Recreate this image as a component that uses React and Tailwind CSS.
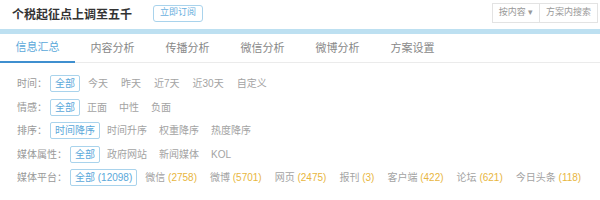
import React from 'react';

const FONT = '"Liberation Sans","Noto Sans CJK SC",sans-serif';

const tabs = ['信息汇总', '内容分析', '传播分析', '微信分析', '微博分析', '方案设置'];

const rows = [
  { label: '时间：', items: ['全部', '今天', '昨天', '近7天', '近30天', '自定义'] },
  { label: '情感：', items: ['全部', '正面', '中性', '负面'] },
  { label: '排序：', items: ['时间降序', '时间升序', '权重降序', '热度降序'] },
  { label: '媒体属性：', items: ['全部', '政府网站', '新闻媒体', 'KOL'] },
];

const platforms = [
  ['微信', '2758'],
  ['微博', '5701'],
  ['网页', '2475'],
  ['报刊', '3'],
  ['客户端', '422'],
  ['论坛', '621'],
  ['今日头条', '118'],
];

const Item = ({ active, children }) => (
  <span
    className={`px-[4px] h-[17px] flex items-center border rounded-[2px] whitespace-nowrap ${
      active ? 'border-[#a9d3ec] text-[#5aa8da]' : 'border-transparent text-[#a3a3a3]'
    }`}
  >
    {children}
  </span>
);

const FilterRow = ({ label, gap, children }) => (
  <div className="flex items-center h-[23.5px] pl-[17px]">
    <span className="text-[#999] mr-[3px] whitespace-nowrap">{label}</span>
    <div className={`flex items-center ${gap ? 'gap-[3px]' : 'gap-[2px]'}`}>{children}</div>
  </div>
);

export default function App() {
  return (
    <div className="w-[600px] h-[200px] bg-white overflow-hidden" style={{ fontFamily: FONT }}>
      {/* header */}
      <div className="flex items-center h-[29px]">
        <span className="ml-[12px] text-[12px] font-bold text-[#333]">个税起征点上调至五千</span>
        <span className="ml-[21px] mt-[-3px] h-[17px] px-[6px] flex items-center border border-[#a9d3ec] rounded-[3px] text-[9px] text-[#6ab0de]">
          立即订阅
        </span>
        <div className="ml-auto mr-[2px] mt-[-4px] flex text-[9px] text-[#999]">
          <span className="h-[20px] w-[48px] flex items-center justify-center border border-[#e3e3e3] bg-white">
            按内容 ▾
          </span>
          <span className="h-[20px] w-[58px] flex items-center justify-center border border-l-0 border-[#e3e3e3] bg-white">
            方案内搜索
          </span>
        </div>
      </div>

      {/* blue bar */}
      <div className="h-[5px] bg-[#bde0f1]" />

      {/* tabs */}
      <div className="flex h-[29px] border-b border-[#ebebeb]">
        {tabs.map((t, i) => (
          <div
            key={t}
            className={`w-[75px] flex items-center justify-center text-[11px] ${
              i === 0 ? 'text-[#5aa8da] border-b-2 border-[#3f8fcf] mb-[-1px]' : 'text-[#888]'
            }`}
          >
            {t}
          </div>
        ))}
      </div>

      {/* filters */}
      <div className="pt-[9px] text-[10px]">
        {rows.map((r, idx) => (
          <FilterRow key={r.label} label={r.label} gap={idx === 0}>
            {r.items.map((it, i) => (
              <Item key={it} active={i === 0}>{it}</Item>
            ))}
          </FilterRow>
        ))}
        <FilterRow label="媒体平台：" gap>
          <Item active>全部 (12098)</Item>
          {platforms.map(([name, n]) => (
            <Item key={name}>
              {name}&nbsp;<span className="text-[#e8b640]">({n})</span>
            </Item>
          ))}
        </FilterRow>
      </div>
    </div>
  );
}
